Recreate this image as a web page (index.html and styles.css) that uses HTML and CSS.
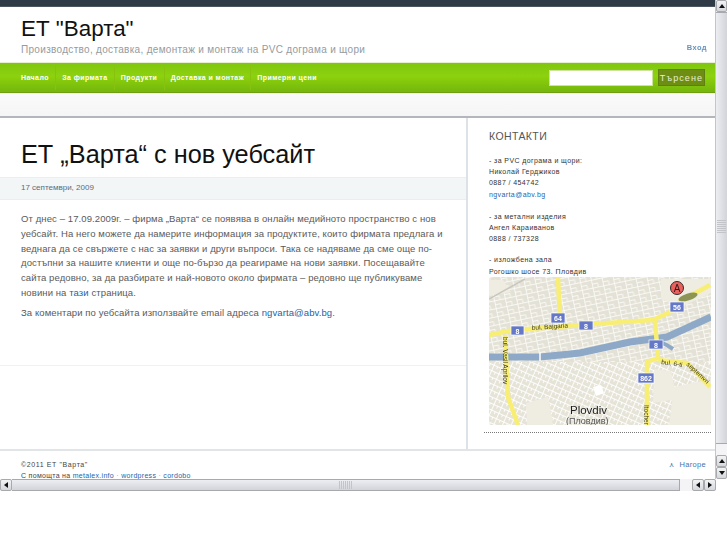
FILE: index.html
```html
<!DOCTYPE html>
<html lang="bg">
<head>
<meta charset="utf-8">
<title>ЕТ "Варта"</title>
<link rel="stylesheet" href="styles.css">
</head>
<body>
<div class="window">
  <div class="view-row">
    <div class="page">
      <div class="topbar"></div>
      <header class="head">
        <div>
          <h1 class="site-title">ЕТ "Варта"</h1>
          <p class="tagline">Производство, доставка, демонтаж и монтаж на PVC дограма и щори</p>
        </div>
        <a class="login" href="#">Вход</a>
      </header>
      <nav class="nav">
        <ul class="menu">
          <li><a href="#">Начало</a></li>
          <li><a href="#">За фирмата</a></li>
          <li><a href="#">Продукти</a></li>
          <li><a href="#">Доставка и монтаж</a></li>
          <li><a href="#">Примерни цени</a></li>
        </ul>
        <form class="search">
          <input class="search-input" type="text" aria-label="Търсене">
          <button class="search-btn" type="button">Търсене</button>
        </form>
      </nav>
      <div class="subnav"></div>
      <div class="columns">
        <main class="main">
          <article class="post">
            <h2 class="post-title">ЕТ „Варта“ с нов уебсайт</h2>
            <div class="post-date">17 септември, 2009</div>
            <div class="post-body">
              <p>От днес – 17.09.2009г. – фирма „Варта“ се появява в онлайн медийното пространство с нов<br>уебсайт. На него можете да намерите информация за продуктите, които фирмата предлага и<br>веднага да се свържете с нас за заявки и други въпроси. Така се надяваме да сме още по-<br>достъпни за нашите клиенти и още по-бързо да реагираме на нови заявки. Посещавайте<br>сайта редовно, за да разбирате и най-новото около фирмата – редовно ще публикуваме<br>новини на <a href="#">тази</a> страница.</p>
              <p>За коментари по уебсайта използвайте email адреса <a href="#">ngvarta@abv.bg</a>.</p>
            </div>
          </article>
        </main>
        <aside class="side">
          <h3 class="side-title">КОНТАКТИ</h3>
          <p class="contact first">- за PVC дограма и щори:<br>Николай Герджиков<br>0887 / 454742<br><a href="#">ngvarta@abv.bg</a></p>
          <p class="contact">- за метални изделия<br>Ангел Караиванов<br>0888 / 737328</p>
          <p class="contact last">- изложбена зала<br>Рогошко шосе 73. Пловдив</p>
          <svg class="map" width="222" height="148" viewBox="0 0 222 148" role="img" aria-label="Карта на Пловдив">
            <defs>
              <pattern id="blocks" width="11" height="8" patternUnits="userSpaceOnUse" patternTransform="rotate(-12)">
                <rect width="11" height="8" fill="#e4e1d6"/>
                <path d="M0 .5H11M.5 0V8M0 4.500H6M6 4.500V8" stroke="#fbfaf6" stroke-width=".9"/>
              </pattern>
              <pattern id="blocks2" width="8" height="6" patternUnits="userSpaceOnUse" patternTransform="rotate(24)">
                <rect width="8" height="6" fill="#e6e3d7"/>
                <path d="M0 .5H8M.5 0V6M4.500 0V3" stroke="#fff" stroke-width=".9"/>
              </pattern>
            </defs>
            <rect width="222" height="148" fill="url(#blocks)"/>
            <path d="M0 85H222V148H0Z" fill="url(#blocks2)"/>
            <path d="M37 126l22-6 5 28H38zM185 110l37-8V148h-42zM165 92l17 2 6 28-24 4zM172 2h50v14l-30 14-20-8zM0 3h14l8 12-22 4z" fill="#efece2"/>
            <path d="M104 110l8-2 3 8-8 3z" fill="#fff"/>
            <path d="M0 22 36 2" fill="none" stroke="#c9c7c0" stroke-width="1.500"/>
            <path d="M0 80H51L91 76 141 65 178 60 200 50 222 40" fill="none" stroke="#8ea9c8" stroke-width="7"/>
            <path d="M141 66C155 60 170 62 184 72" fill="none" stroke="#8ea9c8" stroke-width="4"/>
            <path d="M51 76V84" stroke="#fff" stroke-width="1.500"/>
            <g fill="none" stroke="#f8ee74" stroke-width="4.500" stroke-linejoin="round">
              <path d="M0 58 24 53 68 50 104 47 164 43 181 35 191 25 199 20 221 8"/>
              <path d="M69 0 71 43"/>
              <path d="M16 58 19 120 29 148"/>
              <path d="M166 43 169 81 158 85V148"/>
              <path d="M169 83 198 86 221 110"/>
            </g>
            <ellipse cx="199" cy="20" rx="10" ry="3.500" fill="#8d9554" transform="rotate(-18 199 20)"/>
            <g fill="#6578c8" stroke="#fff" stroke-width=".7">
              <rect x="181" y="25" width="14" height="10"/>
              <rect x="62" y="36" width="14" height="10"/>
              <rect x="22" y="49" width="13" height="9"/>
              <rect x="90" y="44" width="14" height="9"/>
              <rect x="160" y="63" width="14" height="9"/>
              <rect x="149" y="96" width="16" height="10"/>
            </g>
            <g class="map-badge-text" text-anchor="middle">
              <text x="188" y="33">56</text>
              <text x="69" y="44">64</text>
              <text x="28.500" y="56.500">8</text>
              <text x="97" y="51.500">8</text>
              <text x="167" y="70.500">8</text>
              <text x="157" y="104">862</text>
            </g>
            <text class="map-road" x="43" y="53" transform="rotate(-4 43 53)">bul. Bajgaria</text>
            <text class="map-road" transform="translate(14 60) rotate(90)">bul. Vasil Aprilov</text>
            <text class="map-road" transform="translate(172 87) rotate(8)">bul. 6-ti</text>
            <text class="map-road" transform="translate(197 88) rotate(42)">septemvri</text>
            <text class="map-road" transform="translate(155 128) rotate(90)">Itochen</text>
            <circle cx="188" cy="11" r="6.500" fill="#e9605c" stroke="#3a2b2b"/>
            <text class="map-pin" x="188" y="14.500" text-anchor="middle">A</text>
            <text class="map-city" x="81" y="137">Plovdiv</text>
            <text class="map-city-bg" x="77" y="147">(Пловдив)</text>
          </svg>
          <div class="side-rule"></div>
        </aside>
      </div>
      <footer class="foot">
        <div>
          <div class="copy">©2011 ЕТ "Варта"</div>
          <div>С помощта на <a href="#">metalex.info</a> <span class="dot">·</span> <a href="#">wordpress</a> <span class="dot">·</span> <a href="#">cordobo</a></div>
        </div>
        <a class="to-top" href="#"><span class="to-top-icon">⋏</span>Нагоре</a>
      </footer>
    </div>
    <div class="vbar">
      <div class="sb-btn sb-up"></div>
      <div class="sb-thumb-v"><span class="grip-v"></span></div>
      <div class="sb-gap"></div>
      <div class="sb-btn sb-up"></div>
      <div class="sb-btn sb-down"></div>
    </div>
  </div>
  <div class="hbar">
    <div class="sb-btn sb-left"></div>
    <div class="sb-thumb-h"><span class="grip-h"></span></div>
    <div class="sb-gap-h"></div>
    <div class="sb-btn sb-left"></div>
    <div class="sb-btn sb-right"></div>
    <div class="sb-corner"></div>
  </div>
</div>
</body>
</html>
```
FILE: styles.css
```css
* { box-sizing: border-box; }
html, body { margin: 0; padding: 0; background: #fff; overflow: hidden; }
body { font-family: "Liberation Sans", Arial, sans-serif; color: #444; }
p, h1, h2, h3, ul { margin: 0; padding: 0; }
a { color: #1f5fa8; text-decoration: none; }

.window { width: 727px; height: 491px; display: flex; flex-direction: column; }
.view-row { height: 479px; display: flex; }
.page { width: 715px; height: 479px; overflow: hidden; flex: none; }

.topbar { height: 7px; background: #2e3a46; border-bottom: 1px solid #4a5560; }
.head { height: 55px; padding: 9px 8px 0 21px; display: flex; justify-content: space-between; align-items: flex-start; }
.site-title { font-size: 22.400px; line-height: 26px; font-weight: 400; color: #111; }
.tagline { font-size: 10px; line-height: 14px; margin-top: 1px; color: #959ba1; letter-spacing: .31px; }
.login { font-size: 7.500px; margin-top: 27px; line-height: 10px; color: #4a7fb5; letter-spacing: .4px; font-weight: 700; opacity: .85; }

.nav { height: 31px; padding: 0 10px; border-top: 1px solid #e6efd0; border-bottom: 1px solid #6f9f10; background: linear-gradient(#7fc60f, #8dd20e 45%, #74b60b); display: flex; justify-content: space-between; align-items: center; }
.menu { display: flex; list-style: none; align-items: center; }
.menu li { padding: 0 6.300px 0 6px; height: 24px; display: flex; align-items: center; border-left: 1px solid #86c20e; }
.menu li:first-child { border-left: 0; padding-left: 11px; }
.menu a { color: #fff; font-size: 7px; font-weight: 700; letter-spacing: .42px; }
.search { display: flex; gap: 5px; align-items: center; }
.search-input { width: 104px; height: 16px; border: 1px solid #cfe3a0; background: #fff; padding: 0; }
.search-btn { width: 47px; height: 17px; padding: 0; background: #6d8e12; border: 1px solid #5f7f12; color: #e9efd0; font: 9px "Liberation Sans", Arial, sans-serif; letter-spacing: 1.1px; }

.subnav { height: 25px; background: linear-gradient(#fafafa, #f5f5f5); border-top: 1px solid #f2f2f2; border-bottom: 2px solid #b3b7bd; }

.columns { height: 333px; display: flex; border-bottom: 2px solid #e1e5e8; }
.main { width: 466px; flex: none; }
.post { height: 248px; border-bottom: 1px solid #eef2f3; }
.post-title { font-size: 25.300px; line-height: 30px; font-weight: 400; color: #111; padding: 21px 0 8px 21px; height: 59px; }
.post-date { height: 23px; background: #f2f6f7; border-top: 1px solid #eaeef0; border-bottom: 1px solid #eaeef0; padding-left: 21px; font-size: 8px; line-height: 20px; color: #5b6b7b; }
.post-body { padding: 12px 21px 0; font-size: 9.500px; line-height: 14.800px; color: #5a5a5a; letter-spacing: .1px; white-space: nowrap; }
.post-body p { margin-bottom: 5px; }

.side { width: 249px; flex: none; border-left: 2px solid #dde2e8; padding: 11px 4px 0 21px; }
.side-title { font-size: 10.500px; line-height: 14px; font-weight: 400; color: #555; letter-spacing: .4px; margin-bottom: 12px; }
.contact { font-size: 7px; line-height: 11.200px; letter-spacing: .4px; color: #333; margin-bottom: 10px; }
.contact.first { margin-bottom: 11px; }
.contact.last { margin-bottom: 0; }
.map { display: block; filter: blur(.4px); }
.side-rule { margin: 7px 0 0 -5px; width: 227px; border-top: 1px dotted #777; }

.map-badge-text { font: 700 7px "Liberation Sans", Arial, sans-serif; fill: #fff; }
.map-road { font: 6.500px "Liberation Sans", Arial, sans-serif; fill: #3c3a22; }
.map-pin { font: 10px "Liberation Sans", Arial, sans-serif; fill: #2a1a1a; }
.map-city { font: 11.500px "Liberation Sans", Arial, sans-serif; fill: #222; }
.map-city-bg { font: 9px "Liberation Sans", Arial, sans-serif; fill: #555; }

.foot { height: 29px; padding: 8px 9px 0 21px; display: flex; justify-content: space-between; font-size: 7px; line-height: 11px; letter-spacing: .3px; color: #444; }
.copy { letter-spacing: .6px; }
.dot { color: #999; }
.to-top { font-size: 7.500px; letter-spacing: .3px; line-height: 11px; color: #3f76b0; }
.to-top-icon { margin-right: 5px; font-size: 7px; }

.vbar { width: 12px; flex: none; background: #f4f4f6; border-left: 1px solid #c3c5ca; display: flex; flex-direction: column; }
.hbar { height: 12px; display: flex; background: #f4f4f6; }
.sb-btn { width: 12px; height: 12px; flex: none; border: 1px solid #a7a9ad; border-radius: 2px; background: linear-gradient(#f2f3f5, #d5d7dc); display: flex; align-items: center; justify-content: center; }
.vbar .sb-btn { width: 11px; }
.sb-btn::before { content: ""; border: 3px solid transparent; }
.sb-up::before { border-bottom: 4px solid #111; border-top: 0; }
.sb-down::before { border-top: 4px solid #111; border-bottom: 0; }
.sb-left::before { border-right: 4px solid #111; border-left: 0; }
.sb-right::before { border-left: 4px solid #111; border-right: 0; }
.sb-thumb-v { height: 432px; flex: none; background: linear-gradient(90deg, #eceef2, #d2d4da); border-bottom: 1px solid #a7a9ad; border-top: 1px solid #a7a9ad; display: flex; align-items: center; justify-content: center; padding-bottom: 2px; }
.sb-gap { flex: 1; }
.grip-v { width: 9px; height: 14px; background: repeating-linear-gradient(#c2c4ca 0 1px, transparent 1px 2px); }
.sb-thumb-h { width: 668px; flex: none; background: linear-gradient(#eceef2, #d2d4da); border-top: 1px solid #a7a9ad; border-bottom: 1px solid #a7a9ad; border-right: 1px solid #a7a9ad; display: flex; align-items: center; justify-content: center; }
.sb-gap-h { width: 12px; flex: none; }
.grip-h { width: 14px; height: 8px; background: repeating-linear-gradient(90deg, #c2c4ca 0 1px, transparent 1px 2px); }
.sb-corner { flex: 1; background: #fff; }
```
